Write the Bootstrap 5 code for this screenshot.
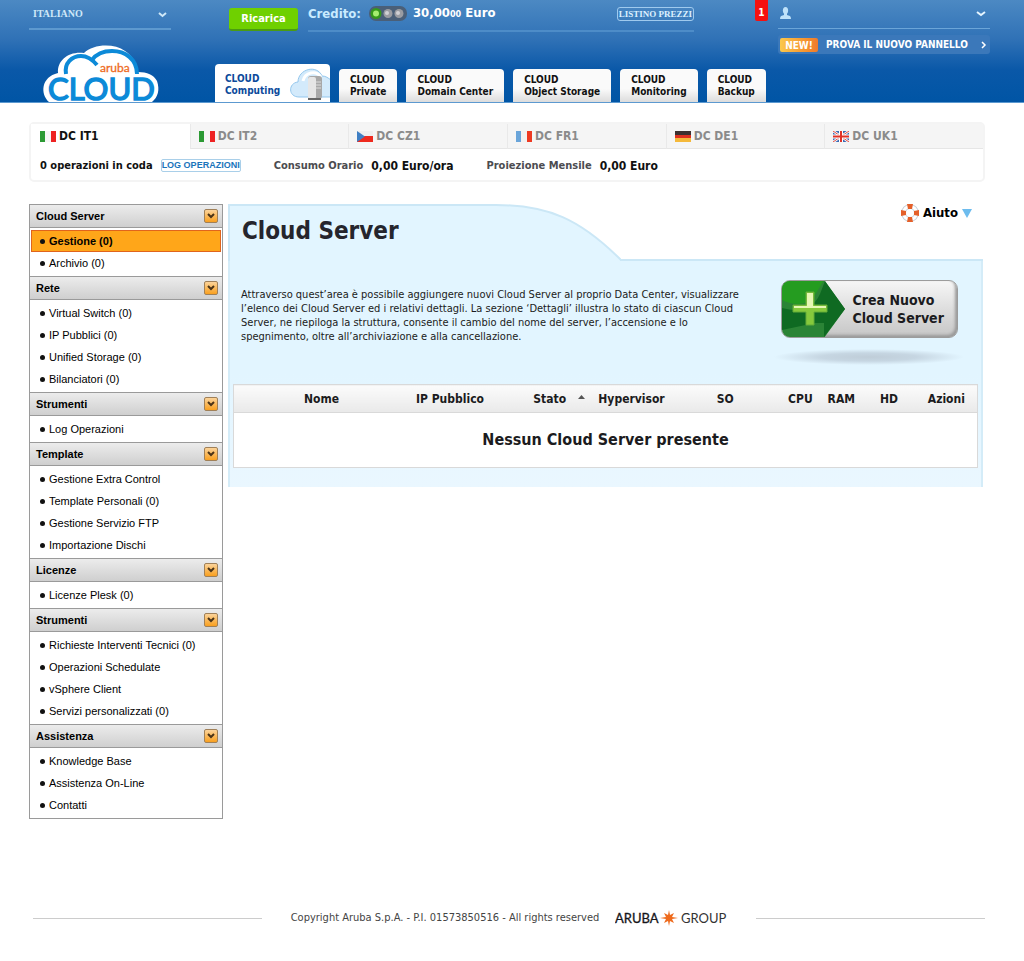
<!DOCTYPE html>
<html lang="it">
<head>
<meta charset="utf-8">
<meta name="viewport" content="width=device-width, initial-scale=1">
<title>Aruba Cloud - Cloud Server</title>
<link href="https://cdn.jsdelivr.net/npm/bootstrap@5.3.0/dist/css/bootstrap.min.css" rel="stylesheet">
<style>
:root{--ui:"DejaVu Sans Condensed","Noto Sans",sans-serif;--menu:"Liberation Sans",Arial,sans-serif;--serif:"Liberation Serif",serif}
body{font-family:var(--ui);font-size:12px;line-height:14px;color:#1b1b20;background:#fff}
a{color:inherit;text-decoration:none}
.gutter{padding-left:29px;padding-right:39px}
/* header */
.topbar{background:linear-gradient(#4c89c3 0,#2f71b6 40px,#0a58a8 70px,#0055a5 100%);border-bottom:1px solid #5c99d0;padding-right:34px}
.brand{width:186px}
.brand a{margin:16px 0 0 14px}
.brand svg{overflow:visible}
.lang{width:142px;height:30px;padding:0 4px;font:bold 10px/12px var(--serif);color:#cfe8f8;background-color:transparent;border:0;border-bottom:2px solid #5d99cf;border-radius:0;background-position:right 4px center;background-size:9px 9px;background-image:url("data:image/svg+xml,%3Csvg xmlns='http://www.w3.org/2000/svg' viewBox='0 0 9 9'%3E%3Cpath d='M1 3l3.500 3L8 3' fill='none' stroke='%23cfe8f8' stroke-width='2'/%3E%3C/svg%3E")}
.lang option{color:#000}
.ricarica{width:69px;height:23px;margin:8px 10px 0 14px;padding:0;font:bold 11px/20px var(--ui);color:#fff;background:#6fd000;border:0;border-bottom:2px solid #4a9c12;border-radius:3px}
.ricarica:hover{background:#7ade08;color:#fff}
.credit{width:386px;height:32px;padding-bottom:3px;border-bottom:2px solid #4d8cc8;font-weight:bold;font-size:13px;line-height:16px;color:#fff}
.credit svg{margin:0 6px 0 8px}
.credit .tag{color:#c9ebff}
.credit .cents{font-size:9px}
.listino{font:bold 9px/12px var(--serif);color:#dcf0ff;border:1px solid #9fcaee;border-radius:3px;padding:0 1px;height:14px}
.alertnum{width:13px;height:21px;margin-right:10px;background:#f51010;border-radius:0 0 2px 2px;color:#fff;font-weight:bold;font-size:10px;line-height:25px}
.account{width:212px}
.account .who{width:100%;height:29px;padding:0 4px 2px 2px;background:none;border:0;border-bottom:1px solid #6ba5d8}
.panelnew{height:19px;margin-top:6px;padding:0 3px 0 2px;background:#3b78ba;border-radius:3px;color:#fff;font-weight:bold;font-size:10px}
.panelnew .new{width:38px;height:14px;line-height:15px;background:linear-gradient(90deg,#fbc84c,#f5912e 70%,#ee7a2c);border-radius:2px}
.toprow{height:64px}
.tabs{gap:9px;height:38px;font-size:10px;line-height:12px;font-weight:bold;color:#111}
.tabs a{height:33px;padding:5px 11px 0;background:linear-gradient(#fafafa 60%,#dcdcdc);border-radius:4px 4px 0 0;white-space:nowrap}
.tabs a.on{width:115px;height:38px;padding:9px 0 0 10px;background:#fff;color:#0b4a9b;overflow:hidden}
.tabs a.on svg{margin-top:-7px}
/* data centre box */
.dcbox{margin-top:19px;border:2px solid #f4f4f4;border-radius:5px;height:60px}
.dcs a{flex:1 1 0;height:25px;padding-left:8px;gap:3px;background:#f5f5f5;border-left:1px solid #e9e9e9;border-bottom:1px solid #e6e6e6;color:#8b8b8b;font-weight:bold}
.dcs a.on{background:#fff;color:#111;border-color:#fff;border-radius:0 4px 0 0}
.ops{height:33px;padding-left:9px;font-weight:bold;color:#111}
.ops .dim{font-size:11px;color:#4c4c50;margin-left:33px;margin-right:8px}
.ops .queue{font-size:11px}
.log{font:bold 9px/11px var(--menu);color:#1a74bb;border:1px solid #a9cfe9;border-radius:2px;height:13px;margin-left:8px}
.columns{margin-top:22px}
/* sidebar */
.side{width:194px;border:1px solid #9a9a9a;border-top:0;font:11px/14px var(--menu);color:#000;margin-right:5px}
.side h2{height:24px;margin:0;padding:0 4px 0 6px;border:solid #9a9a9a;border-width:1px 0;background:linear-gradient(#ececec,#cfcfcf);font-size:11px;font-weight:bold;line-height:14px}
.side h2 button{width:14px;height:14px;padding:0;border:1px solid #a08058;border-radius:2px;background:linear-gradient(#fbd39a,#f9a01f)}
.side h2 svg{display:block;margin:auto}
.side ul{margin:0;padding:2px 1px}
.side li a{display:flex;align-items:center;height:22px;padding-left:9px;gap:4px}
.side li a::before{content:"";width:5px;height:5px;border-radius:50%;background:#111}
.side li a.on{padding-left:8px;background:#ffa619;border:1px solid #e0641c;font-weight:bold}
/* main panel */
.mainarea{margin-right:2px}
.hump{width:393px;height:57px;background:url("data:image/svg+xml,%3Csvg xmlns='http://www.w3.org/2000/svg' width='393' height='57'%3E%3Cpath d='M1 58V1H268C320 1 352 15 393 56V58z' fill='%23e2f5ff' stroke='%23cbe7f6' stroke-width='2'/%3E%3C/svg%3E") no-repeat;padding:13px 0 0 14px}
.hump h1{font-size:24px;line-height:28px;font-weight:bold;color:#25252d;margin:0}
.ledge{height:57px;border-bottom:2px solid #cbe7f6;padding:0 11px 0 0}
.help{height:18px;gap:4px;font-weight:bold;font-size:13px;color:#000}
.pane{background:linear-gradient(#e2f5ff 50%,#eaf7ff);border:solid #d4ecf8;border-width:0 2px;padding:0 3px 19px 3px}
.intro{max-width:510px;font-size:11px;line-height:14px;padding-top:27px}
.action{padding-top:19px;margin-right:14px}
.create{width:177px;height:58px;padding:0;border:1px solid #9c9c9c;border-radius:9px;overflow:hidden;background:linear-gradient(#f6f6f6,#c6c6c6);box-shadow:inset -2px -2px 3px #999;font:bold 14px/18px var(--ui);color:#1b1b20;text-align:left}
.create svg{display:block;flex:none}
.shade{width:190px;height:16px;margin-top:11px;background:radial-gradient(closest-side,#bfcdd8,#c6d6e2 50%,transparent)}
.servers{table-layout:fixed;width:100%;margin:19px 0 0;background:#fff;border:1px solid #d9d9d9;text-align:center}
.servers th{height:28px;padding:0;background:linear-gradient(#fbfbfb,#e9e9e9);border-bottom:1px solid #d9d9d9;font-size:12px;line-height:14px;white-space:nowrap}
.servers td{height:55px;font-size:16px;line-height:20px;font-weight:bold}
.servers .sorted{text-align:right;padding-right:8px}
/* footer */
.foot{margin-top:89px;padding-left:33px;font-size:11px;line-height:20px;color:#444}
.foot hr{flex:1 1 0;margin:0;border-color:#ccc;opacity:1}
.foot .legal{margin:0 29px}
</style>
</head>
<body>
<header class="topbar d-flex gutter">
  <div class="brand">
    <select class="form-select lang" aria-label="Lingua"><option>ITALIANO</option></select>
    <a href="#" class="d-block" aria-label="Aruba Cloud">
      <svg class="d-block" width="116" height="56" viewBox="0 0 116 56">
        <path d="M6 56C-3 48-2 31 15 27 14 14 26 5 41 7 50-2 71-3 82 5c8 5 11 12 13 21 9 0 16 3 19 9 3 9 1 16-5 21z" fill="#fff"/>
        <path d="M23 28C21 17 29 10 38 10c6 0 11 3 16 9M49 14C54 7 60 5 69 5c13 0 25 8 25 23" fill="none" stroke="#0c8ad8" stroke-width="4"/>
        <text x="57" y="26" font-family="Lato,sans-serif" font-size="12" fill="#ee6a1c" stroke="#ee6a1c" stroke-width=".3">aruba</text>
        <text x="5" y="54" font-family="Lato,sans-serif" font-size="31" fill="#0c8ad8" stroke="#0c8ad8" stroke-width="1.500">CLOUD</text>
      </svg>
    </a>
  </div>
  <div class="flex-grow-1">
    <div class="toprow d-flex align-items-start">
      <button class="btn ricarica" type="button">Ricarica</button>
      <div class="credit d-flex align-items-center me-auto">
        <span class="tag">Credito:</span>
        <svg width="38" height="15" viewBox="0 0 38 15"><rect width="38" height="15" rx="7" fill="#4a5f78"/><circle cx="7" cy="7.500" r="5.500" fill="#36981c"/><circle cx="7" cy="7.500" r="3" fill="#a6ee70"/><circle cx="19" cy="7.500" r="4.500" fill="#9a9ca2"/><circle cx="30" cy="7.500" r="4.500" fill="#9a9ca2"/><circle cx="18" cy="7" r="2" fill="#d0d0d4"/><circle cx="29" cy="7" r="2" fill="#d0d0d4"/></svg>
        <span>30,00<span class="cents">00</span> Euro</span>
        <a href="#" class="listino ms-auto">LISTINO PREZZI</a>
      </div>
      <span class="alertnum text-center">1</span>
      <div class="account">
        <button class="who d-flex align-items-center justify-content-between" type="button" aria-label="Account">
          <svg width="11" height="12" viewBox="0 0 11 12" fill="#bfe2fa"><ellipse cx="5.500" cy="3.500" rx="2.600" ry="3.500"/><path d="M4 6h3v2l3 1q1 1 1 3H0q0-2 1-3l3-1z"/></svg>
          <svg width="10" height="8" viewBox="0 0 10 8"><path d="M1 3l4 3 4-3" fill="none" stroke="#e6f5ff" stroke-width="2"/></svg>
        </button>
        <a href="#" class="panelnew d-flex align-items-center"><span class="new text-center me-2">NEW!</span>PROVA IL NUOVO PANNELLO
          <svg class="ms-auto" width="6" height="8" viewBox="0 0 6 8"><path d="M1 1l3 3-3 3" fill="none" stroke="#fff" stroke-width="1.500"/></svg></a>
      </div>
    </div>
    <nav class="tabs d-flex align-items-end">
      <a href="#" class="on d-flex">CLOUD<br>Computing
        <svg class="ms-auto" width="40" height="34" viewBox="0 0 40 34">
          <path d="M9 31C-2 31-2 17 8 16 8 3 27-2 32 10c4 0 6 2 9 4v17z" fill="#d3eafb" stroke="#93c6ec"/>
          <path d="M13 15C15 6 26 4 31 11" fill="none" stroke="#fff" stroke-width="3"/>
          <rect x="18" y="10" width="14" height="23" rx="3" fill="#a8a8a8"/><rect x="18" y="11" width="8" height="22" rx="2" fill="#e6e6e6"/><path d="M26 16h5M26 19h5M26 22h5" stroke="#ddd"/><path d="M18 33h13" stroke="#666" stroke-width="2"/></svg></a>
      <a href="#">CLOUD<br>Private</a>
      <a href="#">CLOUD<br>Domain Center</a>
      <a href="#">CLOUD<br>Object Storage</a>
      <a href="#">CLOUD<br>Monitoring</a>
      <a href="#">CLOUD<br>Backup</a>
    </nav>
  </div>
</header>

<div class="gutter">
  <section class="dcbox">
    <nav class="dcs d-flex">
      <a href="#" class="on d-flex align-items-center"><svg width="16" height="11"><rect width="16" height="11" fill="#f6f6f6"/><rect width="5" height="11" fill="#2c9a34"/><rect x="11" width="5" height="11" fill="#ee2222"/></svg>DC IT1</a>
      <a href="#" class="d-flex align-items-center"><svg width="16" height="11"><rect width="16" height="11" fill="#f6f6f6"/><rect width="5" height="11" fill="#2c9a34"/><rect x="11" width="5" height="11" fill="#ee2222"/></svg>DC IT2</a>
      <a href="#" class="d-flex align-items-center"><svg width="16" height="11"><rect width="16" height="6" fill="#eee"/><rect y="5" width="16" height="6" fill="#ee2a1e"/><path d="M0 0l8 5.500L0 11z" fill="#3f7fc4"/></svg>DC CZ1</a>
      <a href="#" class="d-flex align-items-center"><svg width="16" height="11"><rect width="16" height="11" fill="#f2f2f2"/><rect width="5" height="11" fill="#6aa5da"/><rect x="11" width="5" height="11" fill="#ee3a22"/></svg>DC FR1</a>
      <a href="#" class="d-flex align-items-center"><svg width="16" height="11"><rect width="16" height="4" fill="#3c3030"/><rect y="4" width="16" height="4" fill="#dd3020"/><rect y="7" width="16" height="4" fill="#f5b93a"/></svg>DC DE1</a>
      <a href="#" class="d-flex align-items-center"><svg width="16" height="11"><rect width="16" height="11" fill="#3c6cb4"/><path d="M0 0l16 11M16 0L0 11" stroke="#fff" stroke-width="2.500"/><path d="M0 0l16 11M16 0L0 11" stroke="#e04a40"/><path d="M8 0v11M0 5.500h16" stroke="#fff" stroke-width="4"/><path d="M8 0v11M0 5.500h16" stroke="#e03328" stroke-width="2"/></svg>DC UK1</a>
    </nav>
    <div class="ops d-flex align-items-center">
      <span class="queue">0 operazioni in coda</span><a href="#" class="log">LOG OPERAZIONI</a>
      <span class="dim">Consumo Orario</span><span>0,00 Euro/ora</span>
      <span class="dim">Proiezione Mensile</span><span>0,00 Euro</span>
    </div>
  </section>

  <div class="columns d-flex align-items-start">
    <nav class="side flex-shrink-0">
      <h2 class="d-flex align-items-center justify-content-between">Cloud Server<button type="button" aria-label="Apri Cloud Server"><svg width="8" height="6" viewBox="0 0 8 6"><path d="M1 1l3 3 3-3" fill="none" stroke="#4a3318" stroke-width="2"/></svg></button></h2>
      <ul class="list-unstyled"><li><a href="#" class="on">Gestione (0)</a></li><li><a href="#">Archivio (0)</a></li></ul>
      <h2 class="d-flex align-items-center justify-content-between">Rete<button type="button" aria-label="Apri Rete"><svg width="8" height="6" viewBox="0 0 8 6"><path d="M1 1l3 3 3-3" fill="none" stroke="#4a3318" stroke-width="2"/></svg></button></h2>
      <ul class="list-unstyled"><li><a href="#">Virtual Switch (0)</a></li><li><a href="#">IP Pubblici (0)</a></li><li><a href="#">Unified Storage (0)</a></li><li><a href="#">Bilanciatori (0)</a></li></ul>
      <h2 class="d-flex align-items-center justify-content-between">Strumenti<button type="button" aria-label="Apri Strumenti"><svg width="8" height="6" viewBox="0 0 8 6"><path d="M1 1l3 3 3-3" fill="none" stroke="#4a3318" stroke-width="2"/></svg></button></h2>
      <ul class="list-unstyled"><li><a href="#">Log Operazioni</a></li></ul>
      <h2 class="d-flex align-items-center justify-content-between">Template<button type="button" aria-label="Apri Template"><svg width="8" height="6" viewBox="0 0 8 6"><path d="M1 1l3 3 3-3" fill="none" stroke="#4a3318" stroke-width="2"/></svg></button></h2>
      <ul class="list-unstyled"><li><a href="#">Gestione Extra Control</a></li><li><a href="#">Template Personali (0)</a></li><li><a href="#">Gestione Servizio FTP</a></li><li><a href="#">Importazione Dischi</a></li></ul>
      <h2 class="d-flex align-items-center justify-content-between">Licenze<button type="button" aria-label="Apri Licenze"><svg width="8" height="6" viewBox="0 0 8 6"><path d="M1 1l3 3 3-3" fill="none" stroke="#4a3318" stroke-width="2"/></svg></button></h2>
      <ul class="list-unstyled"><li><a href="#">Licenze Plesk (0)</a></li></ul>
      <h2 class="d-flex align-items-center justify-content-between">Strumenti<button type="button" aria-label="Apri Strumenti"><svg width="8" height="6" viewBox="0 0 8 6"><path d="M1 1l3 3 3-3" fill="none" stroke="#4a3318" stroke-width="2"/></svg></button></h2>
      <ul class="list-unstyled"><li><a href="#">Richieste Interventi Tecnici (0)</a></li><li><a href="#">Operazioni Schedulate</a></li><li><a href="#">vSphere Client</a></li><li><a href="#">Servizi personalizzati (0)</a></li></ul>
      <h2 class="d-flex align-items-center justify-content-between">Assistenza<button type="button" aria-label="Apri Assistenza"><svg width="8" height="6" viewBox="0 0 8 6"><path d="M1 1l3 3 3-3" fill="none" stroke="#4a3318" stroke-width="2"/></svg></button></h2>
      <ul class="list-unstyled"><li><a href="#">Knowledge Base</a></li><li><a href="#">Assistenza On-Line</a></li><li><a href="#">Contatti</a></li></ul>
    </nav>

    <main class="mainarea flex-grow-1">
      <div class="d-flex">
        <div class="hump flex-shrink-0"><h1>Cloud Server</h1></div>
        <div class="ledge flex-grow-1 d-flex justify-content-end">
          <a href="#" class="help d-flex align-items-center">
            <svg width="18" height="18" viewBox="0 0 18 18"><circle cx="9" cy="9" r="6.500" fill="none" stroke="#c3cdd6" stroke-width="5"/><circle cx="9" cy="9" r="6.500" fill="none" stroke="#fff" stroke-width="3"/><path d="M6 0h6l-1 5H7zM6 18h6l-1-5H7zM0 6v6l5-1V7zM18 6v6l-5-1V7z" fill="#e4602a"/></svg>
            Aiuto
            <svg width="10" height="9" viewBox="0 0 10 9"><path d="M0 0h10L5 9z" fill="#6dbcee"/></svg></a>
        </div>
      </div>
      <div class="pane">
        <div class="d-flex justify-content-between">
          <p class="intro mb-0 ms-2">Attraverso quest’area è possibile aggiungere nuovi Cloud Server al proprio Data Center, visualizzare l’elenco dei Cloud Server ed i relativi dettagli. La sezione ‘Dettagli’ illustra lo stato di ciascun Cloud Server, ne riepiloga la struttura, consente il cambio del nome del server, l’accensione e lo spegnimento, oltre all’archiviazione e alla cancellazione.</p>
          <div class="action d-flex flex-column align-items-center flex-shrink-0">
            <button class="create d-flex align-items-center" type="button">
              <svg width="63" height="58" viewBox="0 0 63 58"><path d="M0 0h42l21 29-21 29H0z" fill="#2b8436"/><path d="M0 0h42l-12 20Q16 28 0 20z" fill="#259c20"/><path d="M0 28q28 8 38-14l5-13 20 28-21 28V43H33L0 50z" fill="#0f6a22"/><path d="M24 12h8v13h13v7H32v13h-8V32H11v-7h13z" fill="#86c93c" stroke="#64ac38"/><path d="M25 13h6v13h13v2H12v-2h13z" fill="#e6f7b4"/></svg>
              <span class="ms-2">Crea Nuovo<br>Cloud Server</span>
            </button>
            <div class="shade"></div>
          </div>
        </div>
        <table class="servers">
          <colgroup><col style="width:23.6%"><col style="width:11%"><col style="width:13.7%"><col style="width:10.4%"><col style="width:14.8%"><col style="width:5.4%"><col style="width:5.6%"><col style="width:7.2%"><col style="width:8.3%"></colgroup>
          <thead><tr><th>Nome</th><th>IP Pubblico</th><th class="sorted">Stato <svg class="ms-2 mb-1" width="7" height="4" viewBox="0 0 7 4"><path d="M0 4h7L3.500 0z" fill="#555"/></svg></th><th>Hypervisor</th><th>SO</th><th>CPU</th><th>RAM</th><th>HD</th><th>Azioni</th></tr></thead>
          <tbody><tr><td colspan="9">Nessun Cloud Server presente</td></tr></tbody>
        </table>
      </div>
    </main>
  </div>
</div>

<footer class="foot gutter d-flex align-items-center">
  <hr>
  <span class="legal d-flex align-items-center">Copyright Aruba S.p.A. - P.I. 01573850516 - All rights reserved
    <svg class="ms-3" width="112" height="18" viewBox="0 0 112 18"><g font-family="Lato,sans-serif" font-size="13"><text x="0" y="14" fill="#15151a" stroke="#15151a" stroke-width=".3">ARUBA</text><text x="66" y="14" fill="#333">GROUP</text></g><path d="M54 1l1 5 4-2-2 4 6 1-6 1 2 4-4-2-1 5-1-5-4 2 2-4-6-1 6-1-2-4 4 2z" fill="#ee6a1c"/></svg></span>
  <hr>
</footer>
<script src="https://cdn.jsdelivr.net/npm/bootstrap@5.3.0/dist/js/bootstrap.bundle.min.js"></script>
</body>
</html>
